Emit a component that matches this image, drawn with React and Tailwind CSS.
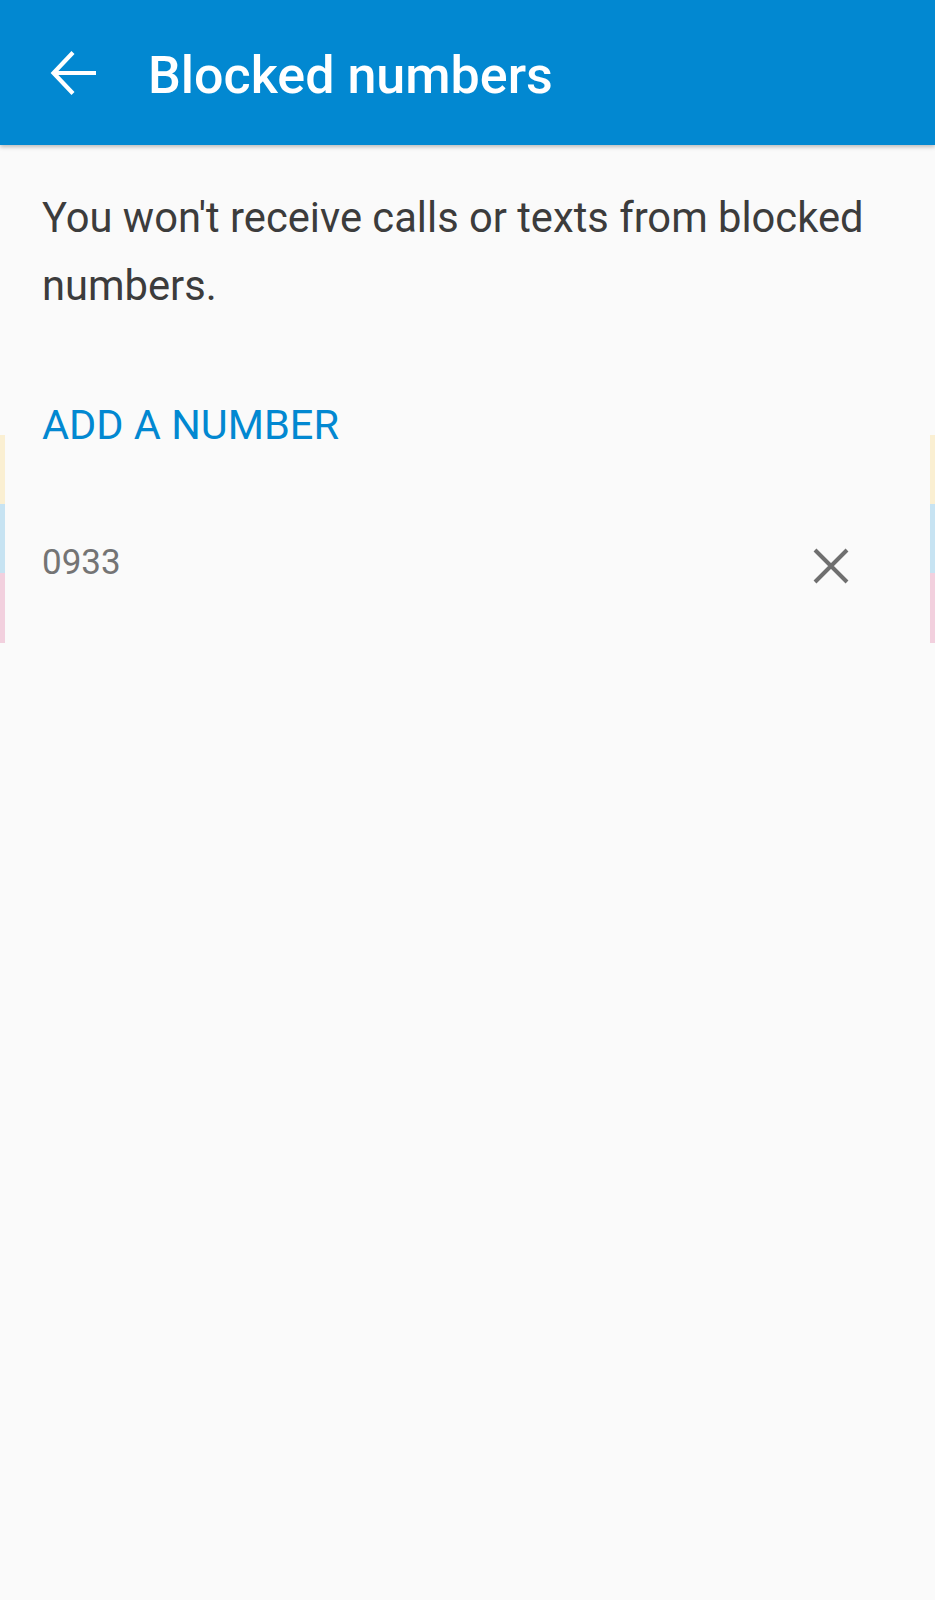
import React from "react";

export default function App() {
  return (
    <div className="w-[935px] h-[1600px] bg-[#fafafa] overflow-hidden" style={{ fontFamily: "Roboto, 'Noto Sans', sans-serif" }}>
      <header className="h-[145px] bg-[#0288d1] flex items-center shadow-[0_2px_4px_rgba(0,0,0,0.25)] relative z-10">
        <div className="w-[148px] flex items-center pl-[49px]">
          <svg width="48" height="46" viewBox="0 0 48 46" fill="none" stroke="white" strokeWidth="4.2" strokeLinecap="butt">
            <path d="M47 23H5" />
            <path d="M24 2.5L4.5 23L24 43.5" />
          </svg>
        </div>
        <h1 className="text-white font-medium text-[52px] leading-none mt-[7px]">Blocked numbers</h1>
      </header>

      <div className="pl-[42px] pr-[40px] pt-[39px]">
        <p className="text-[#3c3c3c] text-[41.7px] leading-[68px]">
          You won't receive calls or texts from blocked numbers.
        </p>
      </div>

      <div className="relative mt-[85px]">
        <div className="absolute left-0 top-[30px] w-[5px] flex flex-col">
          <div className="h-[69px] bg-[#faefd2]" />
          <div className="h-[69px] bg-[#c7e3f2]" />
          <div className="h-[70px] bg-[#f2d0de]" />
        </div>
        <div className="absolute right-0 top-[30px] w-[5px] flex flex-col">
          <div className="h-[69px] bg-[#faefd2]" />
          <div className="h-[69px] bg-[#c7e3f2]" />
          <div className="h-[70px] bg-[#f2d0de]" />
        </div>

        <div className="pl-[42px] text-[#0288d1] text-[41.5px] leading-[40px]">ADD A NUMBER</div>

        <div className="flex items-center justify-between pl-[42px] pr-[86px] mt-[89px] h-[60px]">
          <span className="text-[#747474] text-[35px] leading-none mb-[4px]">0933</span>
          <svg width="36" height="36" viewBox="0 0 36 36" stroke="#6f6f6f" strokeWidth="4" className="mt-[4px]">
            <path d="M2 2L34 34M34 2L2 34" />
          </svg>
        </div>
      </div>
    </div>
  );
}
